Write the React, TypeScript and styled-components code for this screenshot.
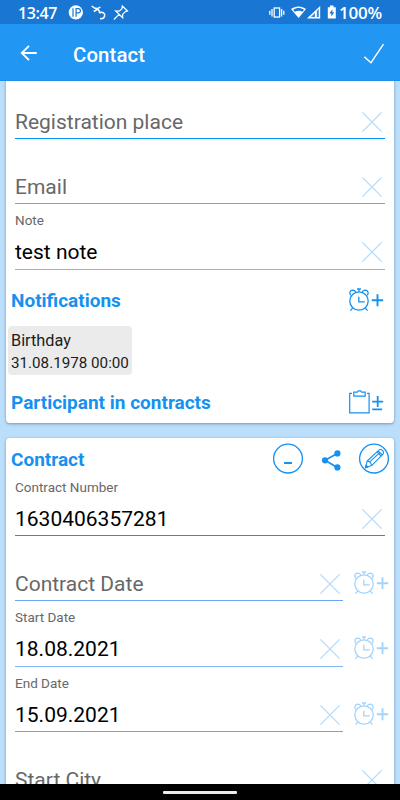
import React from "react";
import styled, { createGlobalStyle } from "styled-components";

const BLUE = "#1691f0";

const GlobalStyle = createGlobalStyle`
  * { box-sizing: border-box; }
  html, body { margin: 0; padding: 0; overflow: hidden; }
  body { font-family: Roboto, "Liberation Sans", sans-serif; }
  svg { display: block; flex: none; overflow: visible; }
`;

const Screen = styled.div`
  display: flex;
  flex-direction: column;
  width: 400px;
  height: 800px;
  background: #bbdefb;
`;

const StatusBar = styled.div`
  display: flex;
  align-items: center;
  flex: none;
  height: 24px;
  padding: 2px 18px 0 18px;
  background: #1976d2;
  color: #fff;
`;

const StatusText = styled.span<{ $size: number; $spacing: number }>`
  font-family: "Open Sans", Roboto, sans-serif;
  font-weight: 600;
  font-size: ${(p) => p.$size}px;
  letter-spacing: ${(p) => p.$spacing}px;
  line-height: 20px;
  white-space: nowrap;
`;

const StatusLeft = styled.div`
  display: flex;
  align-items: center;
  flex: 1;
`;

const StatusTime = styled.div`
  width: 50px;
`;

const StatusRight = styled.div`
  display: flex;
  align-items: center;
`;

const AppBar = styled.header`
  display: flex;
  align-items: center;
  flex: none;
  height: 57px;
  padding: 2px 16px 0 20px;
  background: #2196f3;
  border-bottom: 1px solid #1b8fea;
  color: #fff;
`;

const AppTitle = styled.h1`
  flex: 1;
  margin: 3px 0 0 36px;
  font-size: 20.4px;
  font-weight: 500;
  line-height: 28px;
  letter-spacing: 0.1px;
`;

const Scroll = styled.main`
  flex: 1;
  min-height: 0;
  overflow: hidden;
  padding: 0 6px;
`;

const Card = styled.section<{ $scrolled?: boolean }>`
  margin-top: ${(p) => (p.$scrolled ? "-7px" : "15px")};
  height: ${(p) => (p.$scrolled ? "349px" : "420px")};
  background: #fff;
  border-radius: 4px;
  box-shadow: 0 1px 3px rgba(40, 80, 120, 0.5);
`;

const Field = styled.div`
  display: flex;
  height: 65.2px;
  padding: 0 9px;
`;

const FieldBody = styled.div<{ $line: string }>`
  flex: 1;
  display: flex;
  flex-direction: column;
  border-bottom: 1px solid ${(p) => p.$line};
`;

const Label = styled.div`
  height: 32px;
  padding-top: 8px;
  font-size: 13.5px;
  line-height: 16px;
  color: #686868;
`;

const ValueRow = styled.div`
  display: flex;
  align-items: center;
  justify-content: space-between;
  height: 32px;
  padding-right: 3.5px;
`;

const Value = styled.span<{ $hint?: boolean }>`
  font-size: 21px;
  line-height: 28px;
  white-space: nowrap;
  color: ${(p) => (p.$hint ? "#686868" : "#000")};
`;

const Side = styled.div`
  flex: none;
  width: 42px;
  padding: 35px 0 0 11px;
`;

const SectionRow = styled.div<{ $height: number; $top?: number }>`
  display: flex;
  align-items: center;
  justify-content: space-between;
  height: ${(p) => p.$height}px;
  padding: ${(p) => p.$top ?? 0}px 10px 0 5px;
`;

const Heading = styled.h2`
  margin: 2px 0 0;
  font-size: 19px;
  font-weight: 700;
  line-height: 24px;
  color: ${BLUE};
`;

const Chip = styled.div`
  width: 124px;
  height: 49px;
  margin: 0 0 7px 2px;
  padding: 4px 3px 0;
  border-radius: 4px;
  background: #ebebeb;
  font-size: 16.3px;
  line-height: 22px;
  color: #1c1c1c;
  white-space: nowrap;
`;

const ChipDate = styled.div`
  font-size: 15.2px;
`;

const HeaderRow = styled.div`
  display: flex;
  align-items: center;
  height: 33px;
  padding: 9px 5px 0 5px;
`;

const HeaderActions = styled.div`
  display: flex;
  align-items: center;
  justify-content: space-between;
  width: 116px;
  margin-left: auto;
`;

const NavBar = styled.footer`
  display: flex;
  justify-content: center;
  align-items: center;
  flex: none;
  height: 16px;
  background: #000;
`;

const NavHandle = styled.div`
  width: 74px;
  height: 2.5px;
  margin-top: 1px;
  border-radius: 1px;
  background: #ececec;
`;

const Clear = () => (
  <svg width="20" height="20" viewBox="0 0 20 20" stroke="#b3dbfb" strokeWidth="1.3" fill="none">
    <path d="M.4.4l19.2 19.2M19.6.4.4 19.6" />
  </svg>
);

const AlarmPlus = ({ faded }: { faded?: boolean }) => (
  <svg width="35" height="24" viewBox="0 0 35 24" fill="none" stroke={faded ? "#a4d4fa" : BLUE} strokeWidth="1.3">
    <circle cx="10" cy="13" r="9.2" />
    <path d="M10 3.8V1M8 1h4M9.8 8.8v5h6M3.6 20.2 1.4 22.6M16.4 20.2l2.2 2.4" />
    <path d="M1.6 7.4C0 4.8 1.2 2.3 3.6 2.2c1.6 0 2.7.7 3.1 1.7M18.4 7.4c1.6-2.6.4-5.1-2-5.2-1.6 0-2.7.7-3.1 1.7" />
    <path d="M22.8 12.3h11.4M28.5 6.3v12" strokeWidth="1.9" />
  </svg>
);

const ClipboardPlusMinus = () => (
  <svg width="35" height="24" viewBox="0 0 35 24" fill="none" stroke={BLUE} strokeWidth="1.2">
    <path d="M3 3.4H.7v19.4h19.4V3.4h-2" />
    <path d="M4.8 2.2h3.6l1-1.4h2.2l1 1.4h3.6v4H4.8z" />
    <path d="M23.2 11.6h11M28.7 6v11M23.2 19.4h10" strokeWidth="1.8" />
  </svg>
);

const MinusCircle = () => (
  <svg width="30" height="30" viewBox="0 0 30 30" fill="none" stroke={BLUE}>
    <circle cx="15" cy="14.6" r="14.4" strokeWidth="1.3" />
    <path d="M11 19h8" strokeWidth="2" />
  </svg>
);

const Share = () => (
  <svg width="19" height="21" viewBox="0 -1 19 21" fill={BLUE} stroke={BLUE}>
    <path d="M15.3 3.4 3 10.3l12.3 7.2" fill="none" strokeWidth="1.7" />
    <g stroke="none">
      <circle cx="15.4" cy="3.4" r="3.1" />
      <circle cx="3" cy="10.3" r="3.1" />
      <circle cx="15.4" cy="17.4" r="3.1" />
    </g>
  </svg>
);

const EditCircle = () => (
  <svg width="30" height="30" viewBox="0 0 30 30" fill="none" stroke={BLUE} strokeWidth="1.3">
    <circle cx="15" cy="14.6" r="14.4" />
    <g strokeWidth="1.1" strokeLinejoin="round">
      <path d="M6.4 23.8 8.2 17 19.6 6.3c1-1 2.7-1 3.9.2 1.2 1.2 1.3 2.9.3 3.9L12.6 21.6z" />
      <path d="M8.2 17c2 .2 4 2.2 4.4 4.6M10.5 18.2 21 8.4M17.9 7.9l4.3 4.2M19.1 6.8l4.2 4.2" />
      <path d="M6.4 23.8l.7-2.6 1.8 1.8z" fill={BLUE} />
    </g>
  </svg>
);

const BackArrow = () => (
  <svg width="17" height="16" viewBox="0 0 17 16" fill="none" stroke="#fff" strokeWidth="1.9">
    <path d="M16.8 8H2M9 .9 1.8 8 9 15.1" />
  </svg>
);

const Check = () => (
  <svg width="20" height="20" viewBox="0 0 20 20" fill="none" stroke="#fff" strokeWidth="1.4">
    <path d="M.4 13.9 7 19.7 19.5 1.1" />
  </svg>
);

const StatusIcons = () => (
  <svg width="62" height="16" viewBox="0 0 62 16" fill="none" stroke="#fff">
    <circle cx="7.8" cy="7.4" r="7.1" fill="#fff" stroke="none" />
    <path d="M5 3.2v8.6M8.1 11.8V3.6h2.2a2.1 2.1 0 0 1 0 4.2H8.1" stroke="#1976d2" strokeWidth="1.2" />
    <path d="M23.8 1c2.1 2.1 5.3 3.5 8.6 1M29.9 4 25.8 6.5M29.8 4.1c1.3 1.1 2 2.8 1.5 4M31.4 8.2c3.2-2.2 6 .5 5.2 3-.5 1.7-2.5 2.7-4.6 2.4" strokeWidth="1.5" />
    <path d="M54.3 1 59.5 6 57.4 6.6 54.6 9.4l.1 3.4L47.6 6l3.6.1L54 3.6zM51 9.4 45.9 14.5" strokeWidth="1.2" />
  </svg>
);

const SystemIcons = () => (
  <svg width="70" height="16" viewBox="0 0 70 16" fill="#fff">
    <rect x="5.2" y="3" width="5.4" height="9" fill="none" stroke="#fff" strokeWidth="1.3" />
    <path d="M3 4v7.4M12.6 4v7.4M.8 5.8v4M14.8 5.8v4" stroke="#fff" strokeWidth="1.3" />
    <path d="M22 4C26.4.6 32.6.6 37 4L29.6 13z" />
    <path d="M24.2 4.8c3.4-2.3 7.4-2.3 10.8 0l-1.6 2c-2.3-1.4-5.3-1.4-7.6 0z" fill="#1976d2" />
    <path d="M38.4 13.4V13L51.2 1V13.4z" />
    <path d="M41.8 12l4.2-4v4zM47.8 6.1l2-2V12h-2z" fill="#1976d2" opacity=".85" />
    <path d="M58.8 2.2h2.2V.6h3.6v1.6h2.2v11.4h-8z" />
    <path d="M63.4 4.2 60.4 8.4h1.9v3.1L65.2 7.3h-1.8z" fill="#1976d2" />
  </svg>
);

interface FormFieldProps {
  label?: string;
  value?: string;
  hint?: string;
  alarm?: boolean;
  line?: string;
}

const FormField = ({ label, value, hint, alarm, line = "#6ba6f2" }: FormFieldProps) => (
  <Field>
    <FieldBody $line={line}>
      <Label>{label}</Label>
      <ValueRow>
        <Value $hint={!value}>{value ?? hint}</Value>
        <Clear />
      </ValueRow>
    </FieldBody>
    {alarm && (
      <Side>
        <AlarmPlus faded />
      </Side>
    )}
  </Field>
);

export default function App() {
  return (
    <Screen>
      <GlobalStyle />
      <StatusBar>
        <StatusLeft>
          <StatusTime>
            <StatusText $size={16} $spacing={-0.4}>13:47</StatusText>
          </StatusTime>
          <StatusIcons />
        </StatusLeft>
        <StatusRight>
          <SystemIcons />
          <StatusText $size={17} $spacing={-0.2}>100%</StatusText>
        </StatusRight>
      </StatusBar>
      <AppBar>
        <BackArrow />
        <AppTitle>Contact</AppTitle>
        <Check />
      </AppBar>
      <Scroll>
        <Card $scrolled>
          <FormField hint="Registration place" line="#0795f5" />
          <FormField hint="Email" />
          <FormField label="Note" value="test note" line="#84b4f5" />
          <SectionRow $height={56.4} $top={5}>
            <Heading>Notifications</Heading>
            <AlarmPlus />
          </SectionRow>
          <Chip>
            <div>Birthday</div>
            <ChipDate>31.08.1978 00:00</ChipDate>
          </Chip>
          <SectionRow $height={40}>
            <Heading>Participant in contracts</Heading>
            <ClipboardPlusMinus />
          </SectionRow>
        </Card>
        <Card>
          <HeaderRow>
            <Heading>Contract</Heading>
            <HeaderActions>
              <MinusCircle />
              <Share />
              <EditCircle />
            </HeaderActions>
          </HeaderRow>
          <FormField label="Contract Number" value="1630406357281" line="#208fe6" />
          <FormField hint="Contract Date" alarm />
          <FormField label="Start Date" value="18.08.2021" alarm line="#84b4f5" />
          <FormField label="End Date" value="15.09.2021" alarm />
          <FormField hint="Start City" />
        </Card>
      </Scroll>
      <NavBar>
        <NavHandle />
      </NavBar>
    </Screen>
  );
}
